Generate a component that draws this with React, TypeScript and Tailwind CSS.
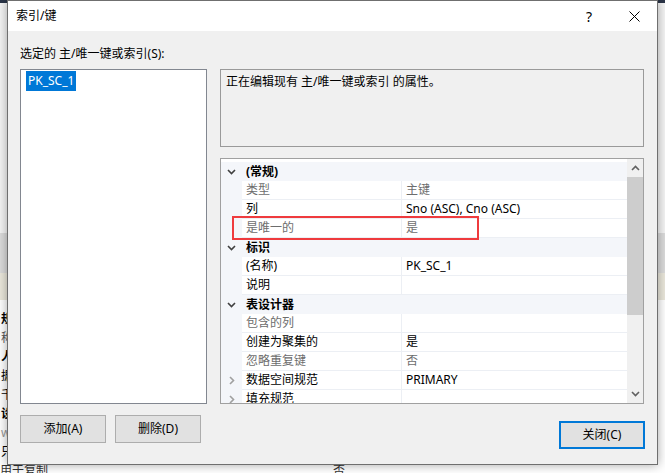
import React from 'react';

type PropRow = {
  label: string;
  value?: string;
  category?: boolean;
  dim?: boolean;
  collapsed?: boolean;
};

const rows: PropRow[] = [
  { label: '(常规)', category: true },
  { label: '类型', value: '主键', dim: true },
  { label: '列', value: 'Sno (ASC), Cno (ASC)' },
  { label: '是唯一的', value: '是', dim: true },
  { label: '标识', category: true },
  { label: '(名称)', value: 'PK_SC_1' },
  { label: '说明', value: '' },
  { label: '表设计器', category: true },
  { label: '包含的列', value: '', dim: true },
  { label: '创建为聚集的', value: '是' },
  { label: '忽略重复键', value: '否', dim: true },
  { label: '数据空间规范', value: 'PRIMARY', collapsed: true },
  { label: '填充规范', value: '', collapsed: true },
];

const ChevronDown = ({ color = '#404040' }: { color?: string }) => (
  <svg width="9" height="6" viewBox="0 0 9 6">
    <path d="M1 1 L4.5 4.5 L8 1" fill="none" stroke={color} strokeWidth="1.6" />
  </svg>
);

const ChevronRight = () => (
  <svg width="6" height="9" viewBox="0 0 6 9">
    <path d="M1 1 L4.5 4.5 L1 8" fill="none" stroke="#a0a0a0" strokeWidth="1.6" />
  </svg>
);

const ChevronUp = () => (
  <svg width="9" height="6" viewBox="0 0 9 6">
    <path d="M1 5 L4.5 1.5 L8 5" fill="none" stroke="#606060" strokeWidth="1.6" />
  </svg>
);

function PropertyGrid() {
  return (
    <div className="mt-[11px] flex h-[246px] border border-[#a0a0a0] bg-white">
      <div className="flex flex-1 flex-col overflow-hidden pt-[3px]">
        {rows.map((row, i) =>
          row.category ? (
            <div key={i} className="flex h-[19px] shrink-0 items-center bg-[#f4f6fa]">
              <div className="flex w-[21px] shrink-0 justify-center">
                <ChevronDown />
              </div>
              <span className="pl-[4px] font-bold text-black">{row.label}</span>
            </div>
          ) : (
            <div key={i} className="flex h-[19px] shrink-0">
              <div className="flex w-[21px] shrink-0 items-center justify-center bg-[#f4f6fa]">
                {row.collapsed && <ChevronRight />}
              </div>
              <div
                className={`flex w-[160px] shrink-0 items-center border-r border-b border-[#eceff4] pl-[4px] ${
                  row.dim ? 'text-[#6d6d6d]' : 'text-black'
                }`}
              >
                {row.label}
              </div>
              <div
                className={`flex flex-1 items-center border-b border-[#eceff4] pl-[4px] ${
                  row.dim ? 'text-[#6d6d6d]' : 'text-black'
                }`}
              >
                {row.value}
              </div>
            </div>
          )
        )}
      </div>
      <div className="flex w-[16px] shrink-0 flex-col bg-[#f0f0f0]">
        <div className="flex h-[18px] items-center justify-center">
          <ChevronUp />
        </div>
        <div className="h-[138px] bg-[#cdcdcd]" />
        <div className="flex-1" />
        <div className="flex h-[18px] items-center justify-center">
          <ChevronDown color="#606060" />
        </div>
      </div>
    </div>
  );
}

function Dialog() {
  return (
    <div className="absolute top-0 left-[7px] flex h-[465px] w-[651px] flex-col border border-[#6f6f6f] bg-[#f0f0f0] shadow-[0_0_10px_rgba(0,0,0,0.35)]">
      {/* title bar */}
      <div className="flex h-[30px] shrink-0 items-center bg-white pl-[8px]">
        <span className="flex-1 text-black">索引/键</span>
        <span className="mr-[37px] text-[14px] text-black">?</span>
        <svg width="11" height="11" viewBox="0 0 11 11" className="mr-[17px]">
          <path d="M0.5 0.5 L10.5 10.5 M10.5 0.5 L0.5 10.5" stroke="#000" strokeWidth="1" />
        </svg>
      </div>

      <div className="flex flex-1 flex-col pt-[15px] pr-[13px] pl-[12px]">
        <div className="h-[16px] leading-[16px] text-black">选定的 主/唯一键或索引(S):</div>

        <div className="mt-[7px] flex gap-[13px]">
          {/* left column */}
          <div className="flex w-[187px] shrink-0 flex-col">
            <div className="h-[335px] border border-[#828790] bg-white pt-[1px] pl-[5px]">
              <span className="inline-block h-[20px] bg-[#0078d7] px-[2px] leading-[20px] text-white">
                PK_SC_1
              </span>
            </div>
            <div className="mt-[11px] flex gap-[9px]">
              <button className="h-[28px] w-[86px] border border-[#adadad] bg-[#e1e1e1] text-black">
                添加(A)
              </button>
              <button className="h-[28px] w-[86px] border border-[#adadad] bg-[#e1e1e1] text-black">
                删除(D)
              </button>
            </div>
          </div>

          {/* right column */}
          <div className="flex flex-1 flex-col">
            <div className="h-[78px] border border-[#9a9a9a] bg-[#f0f0f0] pt-[4px] pl-[5px] leading-[16px] text-black">
              正在编辑现有 主/唯一键或索引 的属性。
            </div>
            <PropertyGrid />
            <div className="mt-[17px] flex justify-end">
              <button className="-mr-px h-[28px] w-[86px] border-2 border-[#0078d7] bg-[#e1e1e1] text-black">
                关闭(C)
              </button>
            </div>
          </div>
        </div>
      </div>
    </div>
  );
}

export default function App() {
  return (
    <div
      className="relative h-[473px] w-[665px] overflow-hidden bg-[#f3f3f3] text-[12px]"
      style={{ fontFamily: '"Noto Sans", "Noto Sans CJK SC", sans-serif' }}
    >
      {/* window behind the dialog */}
      <div className="flex h-full flex-col">
        <div className="h-[3px] shrink-0 bg-[#2b3548]" />
        <div className="h-[230px] shrink-0 bg-[#f5f5f5]" />
        <div className="h-[40px] shrink-0 bg-[#dcdcdc]" />
        <div className="h-[27px] shrink-0 bg-[#ebe8dc]" />
        <div className="flex shrink-0 flex-col bg-white pt-[9px] pl-[1px] font-bold leading-[19px] text-black">
          <span>规</span>
          <span className="font-normal text-[#555]">称</span>
          <span>人</span>
          <span className="font-normal">据</span>
          <span className="font-normal">千</span>
          <span>设</span>
          <span className="font-normal text-[#999]">w</span>
          <span className="font-normal">只</span>
        </div>
        <div className="flex h-[20px] shrink-0 bg-white pt-[1px] text-[#333]">
          <span className="w-[333px]">用于复制</span>
          <span>否</span>
        </div>
      </div>

      <Dialog />

      {/* red annotation box */}
      <div className="absolute top-[216px] left-[232px] h-[24px] w-[247px] border-2 border-[#ef3b3e]" />
    </div>
  );
}
